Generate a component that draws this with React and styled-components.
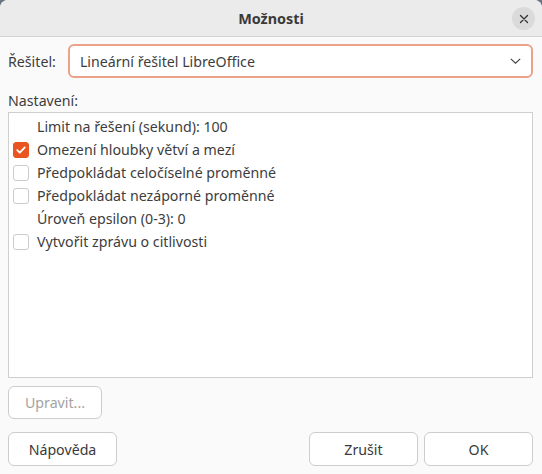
import React from "react";
import styled, { createGlobalStyle } from "styled-components";

const Global = createGlobalStyle`
  html, body { margin: 0; padding: 0; background: #6b7480; }
  body { font-family: "Noto Sans", "Open Sans", sans-serif; }
  #root { width: 542px; height: 474px; }
  * { box-sizing: border-box; }
`;

const Dialog = styled.div`
  width: 542px;
  height: 474px;
  background: #fafafa;
  border-radius: 8px 8px 0 0;
  overflow: hidden;
  display: flex;
  flex-direction: column;
  color: #3d3d3d;
  font-size: 14.2px;
`;

const Header = styled.div`
  height: 37px;
  flex: none;
  background: #ebebeb;
  border-bottom: 1px solid #d2d2d2;
  display: flex;
  align-items: center;
  justify-content: center;
  position: relative;
`;

const Title = styled.div`
  font-weight: 700;
  font-size: 14.4px;
  color: #3a3a3a;
`;

const CloseBtn = styled.div`
  position: absolute;
  right: 7px;
  top: 7px;
  width: 23px;
  height: 23px;
  border-radius: 50%;
  background: #dadada;
  display: flex;
  align-items: center;
  justify-content: center;
`;

const Body = styled.div`
  flex: 1;
  display: flex;
  flex-direction: column;
  padding: 7px 9px 8px 8px;
`;

const SolverRow = styled.div`
  display: flex;
  align-items: center;
  gap: 12px;
  height: 34px;
`;

const Label = styled.div`
  white-space: nowrap;
`;

const Combo = styled.div`
  flex: 1;
  height: 34px;
  border: 2px solid #eca289;
  border-radius: 6px;
  background: #fff;
  display: flex;
  align-items: center;
  justify-content: space-between;
  padding: 0 10px 0 10px;
`;

const SectionLabel = styled.div`
  margin-top: 12px;
  height: 20px;
  display: flex;
  align-items: center;
`;

const ListBox = styled.div`
  margin-top: 2px;
  height: 266px;
  background: #fff;
  border: 1px solid #cfcfcf;
  padding: 2px 4px;
  display: flex;
  flex-direction: column;
`;

const Row = styled.div`
  height: 23px;
  display: flex;
  align-items: center;
  gap: 8px;
  white-space: nowrap;
`;

const Box = styled.div`
  width: 16px;
  height: 16px;
  flex: none;
  border-radius: 3px;
  border: 1px solid ${(p) => (p.$checked ? "#e95420" : "#cbcbcb")};
  background: ${(p) => (p.$checked ? "#e95420" : "#fff")};
  visibility: ${(p) => (p.$hidden ? "hidden" : "visible")};
  display: flex;
  align-items: center;
  justify-content: center;
`;

const Button = styled.div`
  height: ${(p) => p.$h || 34}px;
  width: ${(p) => p.$w}px;
  border: 1px solid #cdcdcd;
  border-radius: 6px;
  background: #fff;
  display: flex;
  align-items: center;
  justify-content: center;
  color: ${(p) => (p.$disabled ? "#a3a3a3" : "#3a3a3a")};
  flex: none;
`;

const EditRow = styled.div`
  margin-top: 8px;
  display: flex;
`;

const Footer = styled.div`
  margin-top: 13px;
  display: flex;
  align-items: center;
  gap: 6px;
`;

const Spacer = styled.div`
  flex: 1;
`;

const Check = () => (
  <svg width="12" height="12" viewBox="0 0 12 12">
    <path d="M2.2 6.2 L4.8 8.7 L9.8 3.4" fill="none" stroke="#fff" strokeWidth="1.8" strokeLinecap="round" strokeLinejoin="round" />
  </svg>
);

const items = [
  { text: "Limit na řešení (sekund): 100", box: false },
  { text: "Omezení hloubky větví a mezí", box: true, checked: true },
  { text: "Předpokládat celočíselné proměnné", box: true },
  { text: "Předpokládat nezáporné proměnné", box: true },
  { text: "Úroveň epsilon (0-3): 0", box: false },
  { text: "Vytvořit zprávu o citlivosti", box: true },
];

export default function App() {
  return (
    <>
      <Global />
      <Dialog>
        <Header>
          <Title>Možnosti</Title>
          <CloseBtn>
            <svg width="10" height="10" viewBox="0 0 10 10">
              <path d="M1.5 1.5 L8.5 8.5 M8.5 1.5 L1.5 8.5" stroke="#333" strokeWidth="1.3" strokeLinecap="round" />
            </svg>
          </CloseBtn>
        </Header>
        <Body>
          <SolverRow>
            <Label>Řešitel:</Label>
            <Combo>
              <span>Lineární řešitel LibreOffice</span>
              <svg width="11" height="6" viewBox="0 0 11 6">
                <path d="M0.8 0.8 L5.5 5.2 L10.2 0.8" fill="none" stroke="#3d3d3d" strokeWidth="1.1" />
              </svg>
            </Combo>
          </SolverRow>
          <SectionLabel>Nastavení:</SectionLabel>
          <ListBox>
            {items.map((it, i) => (
              <Row key={i}>
                <Box $hidden={!it.box} $checked={it.checked}>
                  {it.checked && <Check />}
                </Box>
                <span>{it.text}</span>
              </Row>
            ))}
          </ListBox>
          <EditRow>
            <Button $w={94} $h={33} $disabled>Upravit...</Button>
          </EditRow>
          <Footer>
            <Button $w={109}>Nápověda</Button>
            <Spacer />
            <Button $w={109}>Zrušit</Button>
            <Button $w={109}>OK</Button>
          </Footer>
        </Body>
      </Dialog>
    </>
  );
}
